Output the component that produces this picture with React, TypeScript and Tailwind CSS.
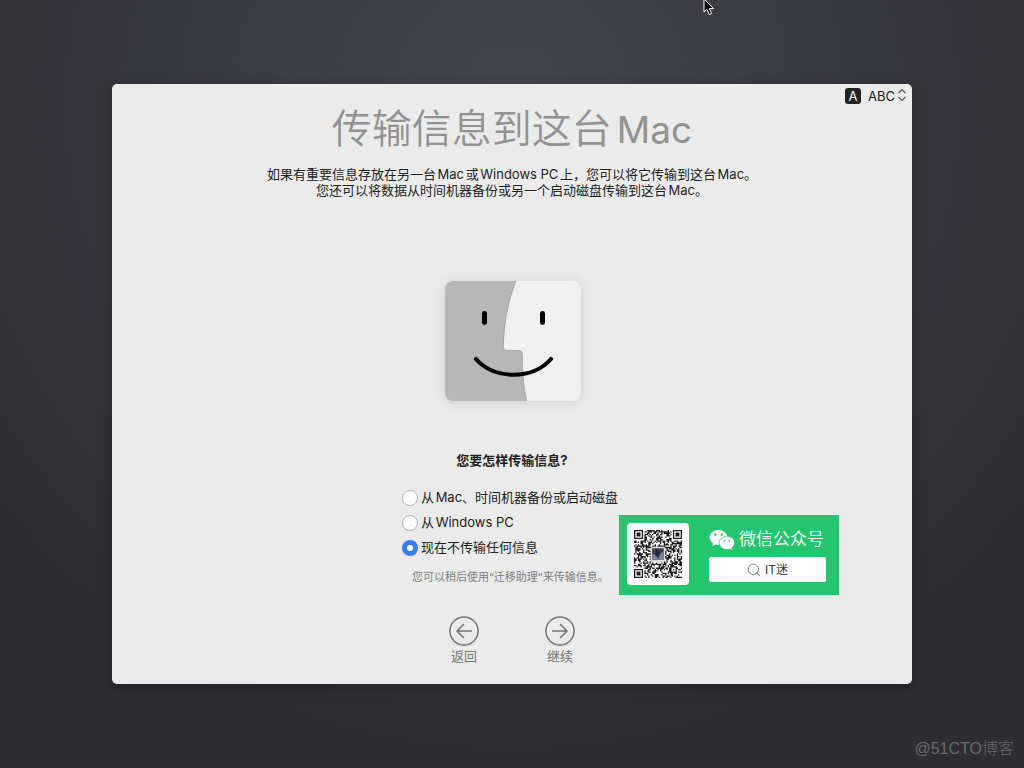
import React, { useState } from 'react';
import { FaWeixin } from 'react-icons/fa';

const OPTIONS = [
  { id: 'mac', label: '从Mac、时间机器备份或启动磁盘' },
  { id: 'windows', label: '从Windows PC' },
  { id: 'none', label: '现在不传输任何信息' },
];

const QR_SIZE = 37;

// Finder patterns in three corners, an alignment mark, noise everywhere else
function isDark(x: number, y: number) {
  const corners = [[0, 0], [QR_SIZE - 7, 0], [0, QR_SIZE - 7]];
  for (const [cx, cy] of corners) {
    const dx = x - cx;
    const dy = y - cy;
    if (dx >= -1 && dx <= 7 && dy >= -1 && dy <= 7) {
      const ring = Math.max(Math.abs(dx - 3), Math.abs(dy - 3));
      return ring === 3 || ring <= 1;
    }
  }
  const align = Math.max(Math.abs(x - 30), Math.abs(y - 30));
  if (align <= 2) return align !== 1;
  let n = (x * 374761393 + y * 668265263) | 0;
  n = Math.imul(n ^ (n >>> 13), 1274126177);
  return ((n ^ (n >>> 16)) & 15) < 8;
}

function QrCode() {
  let d = '';
  for (let y = 0; y < QR_SIZE; y++) {
    for (let x = 0; x < QR_SIZE; x++) {
      if (isDark(x, y)) d += `M${x} ${y}h1v1h-1z`;
    }
  }
  return (
    <svg viewBox="0 0 37 37" className="h-12 w-12" role="img" aria-label="QR">
      <path d={d} fill="#1c1c1c" />
      <rect x="13" y="13" width="11" height="11" rx="1" fill="#d9dbe0" />
      <rect x="14" y="14" width="9" height="9" rx="0.5" fill="#3e4456" />
      <path d="M14 19l3-1 2 2 4-4v7h-9z" fill="#7b8295" />
      <path d="M17 14l3 3-1 5-3-3z" fill="#262b3b" />
    </svg>
  );
}

function FinderFace() {
  return (
    <svg
      viewBox="0 0 136 120"
      className="ml-[2px] h-[120px] w-[136px] rounded-lg bg-[#f0f0f0] shadow-[0_1px_12px_rgba(0,0,0,0.12)]"
      aria-hidden="true"
    >
      <path
        d="M0 0H71C63 19 59 42 58.2 65Q58 69.5 62 69.5H74.5Q77.2 69.5 77.2 72.5C77.3 92 78.5 106 81.7 120H0Z"
        fill="#b7b7b7"
      />
      <path
        d="M71 0C63 19 59 42 58.2 65Q58 69.5 62 69.5H74.5Q77.2 69.5 77.2 72.5C77.3 92 78.5 106 81.7 120"
        fill="none"
        stroke="#a5a5a5"
        strokeWidth="1"
      />
      <rect x="37" y="30" width="5" height="14" rx="2.4" />
      <rect x="95" y="30" width="5" height="14" rx="2.4" />
      <path d="M31 78C49 99 88 99 106 78" fill="none" stroke="#000" strokeWidth="4.2" strokeLinecap="round" />
    </svg>
  );
}

function InputMenu() {
  return (
    <div className="flex h-5 items-center justify-end pt-1 pr-[5px]">
      <label htmlFor="input-source" className="flex h-4 w-4 items-center justify-center rounded-[3px] bg-[#222] text-[13px] leading-4 text-white">
        A
      </label>
      <div className="relative ml-[7px]">
        <select id="input-source" className="block w-[39px] appearance-none bg-transparent text-[13px] leading-4 text-[#222] outline-none">
          <option>ABC</option>
        </select>
        <svg viewBox="0 0 10 14" className="pointer-events-none absolute top-0 right-0 h-[14px] w-[10px]" fill="none" stroke="#555" strokeWidth="1.2">
          <path d="M1.5 5L5 1.5L8.5 5M1.5 9L5 12.5L8.5 9" />
        </svg>
      </div>
    </div>
  );
}

function NavButton({ label, arrow }: { label: string; arrow: string }) {
  return (
    <button className="flex w-[30px] flex-col items-center gap-[2px] text-[#747474]">
      <svg viewBox="0 0 30 30" className="h-[30px] w-[30px]" fill="none" stroke="currentColor" strokeWidth="1.5">
        <circle cx="15" cy="15" r="14.1" />
        <path d={arrow} />
      </svg>
      <span className="text-[13px] leading-4 whitespace-nowrap">{label}</span>
    </button>
  );
}

function WechatBanner() {
  return (
    <aside className="absolute right-[73px] bottom-[89px] flex h-20 w-[220px] items-start bg-[#25c56f] p-2">
      <div className="flex h-[62px] w-[62px] items-center justify-center rounded bg-white">
        <QrCode />
      </div>
      <div className="ml-5 flex w-[117px] flex-col gap-[6px] pt-[5px]">
        <div className="flex h-[23px] items-center gap-1 text-white">
          <FaWeixin className="h-[26px] w-[26px]" />
          <span className="text-[17px] leading-[23px] font-[350] whitespace-nowrap">微信公众号</span>
        </div>
        <button className="flex h-[25px] items-center justify-center gap-1 rounded-[2px] bg-white text-[12px] leading-4 text-[#333] [text-autospace:no-autospace]">
          <svg viewBox="0 0 14 14" className="h-[14px] w-[14px]" fill="none" stroke="#777" strokeWidth="1">
            <circle cx="6.3" cy="6.3" r="5.2" />
            <path d="M10.1 10.1L13 13" />
          </svg>
          <span>IT迷</span>
        </button>
      </div>
    </aside>
  );
}

export default function App() {
  const [selected, setSelected] = useState('none');

  return (
    <div className="relative flex min-h-screen items-center justify-center overflow-hidden bg-[#2e2d32] bg-[radial-gradient(ellipse_64%_85%_at_50%_14%,#43444d_0%,#3a3b42_45%,#2e2d32_100%)] font-['Inter','Noto_Sans_CJK_SC',sans-serif] [text-autospace:normal]">
      <svg viewBox="0 0 12 18" className="absolute top-[-2px] left-[703px] h-[18px] w-3" aria-hidden="true">
        <path d="M1 1V14L4 11.3L6.2 16.6L8.6 15.6L6.4 10.5H10.5Z" fill="#000" stroke="#fff" strokeWidth="1" />
      </svg>

      <main className="relative w-full max-w-[800px] rounded-[5px] bg-[#ebebeb] pb-5 text-[#222] shadow-[0_4px_16px_rgba(0,0,0,0.3)]">
        <InputMenu />

        <h1 className="mt-px text-center text-[40px] leading-[48px] font-[350] text-[#929292]">
          传输信息到这台<span className="text-[37px] font-normal">Mac</span>
        </h1>
        <p className="mt-3 text-center text-[13px] leading-4">
          如果有重要信息存放在另一台Mac或Windows PC上，您可以将它传输到这台Mac。
          <br />
          您还可以将数据从时间机器备份或另一个启动磁盘传输到这台Mac。
        </p>

        <div className="mt-[83px] flex justify-center">
          <FinderFace />
        </div>

        <h2 className="mt-[49px] text-center text-[13px] leading-5 font-bold">您要怎样传输信息?</h2>

        {/* Transfer source */}
        <div className="mx-auto mt-[15px] w-[220px]">
          {OPTIONS.map((option) => (
            <label key={option.id} className="flex h-[25px] items-center gap-[3px] text-[13px] whitespace-nowrap">
              <input
                type="radio"
                name="source"
                checked={selected === option.id}
                onChange={() => setSelected(option.id)}
                className="h-4 w-4 shrink-0 appearance-none rounded-full border border-[#b4b4b4] bg-white checked:border-[5px] checked:border-[#3b7cf5]"
              />
              {option.label}
            </label>
          ))}
          <p className="mt-2 pl-[10px] text-[11px] leading-[18px] whitespace-nowrap text-[#808080]">
            您可以稍后使用“迁移助理”来传输信息。
          </p>
        </div>

        <nav className="mt-[30px] flex justify-center gap-[66px]">
          <NavButton label="返回" arrow="M23 15H8M15 8L8 15L15 22" />
          <NavButton label="继续" arrow="M7 15H22M15 8L22 15L15 22" />
        </nav>

        <WechatBanner />
      </main>

      <span className="absolute right-[10px] bottom-[9px] font-['Liberation_Sans','Noto_Sans_CJK_SC',sans-serif] text-[16px] leading-5 font-light text-[#69696d] [text-autospace:no-autospace]">
        @51CTO博客
      </span>
    </div>
  );
}
